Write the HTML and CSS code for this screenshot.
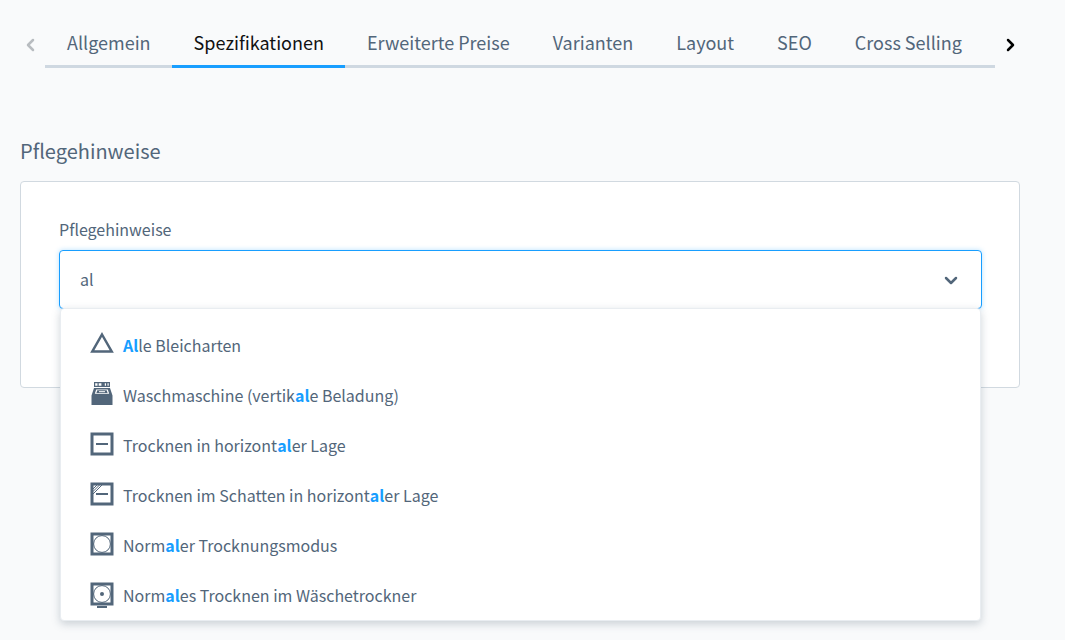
FILE: index.html
```html
<!DOCTYPE html>
<html lang="de">
<head>
<meta charset="utf-8">
<meta name="viewport" content="width=device-width, initial-scale=1">
<title>Spezifikationen</title>
<link rel="stylesheet" href="styles.css">
</head>
<body>
<main class="page">
  <nav class="tabs" aria-label="Produktbereiche">
    <button class="tabs-arrow" type="button" aria-label="Zurück" disabled>
      <svg width="10" height="14" viewBox="0 0 10 14"><path d="M8 2 3 7l5 5"/></svg>
    </button>
    <div class="tabs-list">
      <a class="tab" href="#allgemein">Allgemein</a>
      <a class="tab tab-active" href="#spezifikationen" aria-current="page">Spezifikationen</a>
      <a class="tab" href="#preise">Erweiterte Preise</a>
      <a class="tab" href="#varianten">Varianten</a>
      <a class="tab" href="#layout">Layout</a>
      <a class="tab" href="#seo">SEO</a>
      <a class="tab" href="#cross-selling">Cross Selling</a>
    </div>
    <button class="tabs-arrow tabs-arrow-next" type="button" aria-label="Weiter">
      <svg width="10" height="14" viewBox="0 0 10 14"><path d="m2 2 5 5-5 5"/></svg>
    </button>
  </nav>

  <section class="section">
    <h2 class="section-title">Pflegehinweise</h2>
    <div class="card">
      <label class="field-label" for="care">Pflegehinweise</label>
      <div class="select">
        <div class="select-box">
          <input class="select-input" id="care" type="text" value="al" role="combobox" aria-expanded="true" aria-controls="care-options" autocomplete="off">
          <svg class="select-chevron" width="14" height="10" viewBox="0 0 14 10"><path d="m2 3 5 5 5-5"/></svg>
        </div>
        <ul class="options" id="care-options" role="listbox" aria-label="Pflegehinweise">
          <li class="option" role="option">
            <svg class="icon" viewBox="0 0 24 26"><path class="line-bold" d="M12 4.500 21.700 21.500H2.300z"/></svg>
            <span><b class="hit">Al</b>le Bleicharten</span>
          </li>
          <li class="option" role="option">
            <svg class="icon" viewBox="0 0 24 26"><path class="solid" fill-rule="evenodd" d="M4 2h16v5H4zM5.200 3.200v2.500h2.300V3.200zM8.700 3.200v2.500h2.700V3.200zM14.800 3.200v2.500h1.200V3.200zM17.500 3.200v2.500h1.200V3.200z"/><path class="solid" fill-rule="evenodd" d="M4 8h16l2.500 7.500V25h-21V15.500zM6.200 9.500 4.800 13.700h14.400L17.800 9.500zM7.300 10.300h9.400l.9 2.600H6.400z"/><path class="line-white" d="M9 11.700h6"/></svg>
            <span>Waschmaschine (vertik<b class="hit">al</b>e Beladung)</span>
          </li>
          <li class="option" role="option">
            <svg class="icon" viewBox="0 0 24 26"><path class="line-frame" d="M2 4h20v20H2z"/><path class="line-mid" d="M6 14h12"/></svg>
            <span>Trocknen in horizont<b class="hit">al</b>er Lage</span>
          </li>
          <li class="option" role="option">
            <svg class="icon" viewBox="0 0 24 26"><path class="line-frame" d="M2 4h20v20H2z"/><path class="line-mid" d="M6 14h12"/><path class="line-thin" d="m3 9 5-5M3 11.500 10.500 4M3 14 13 4"/></svg>
            <span>Trocknen im Schatten in horizont<b class="hit">al</b>er Lage</span>
          </li>
          <li class="option" role="option">
            <svg class="icon" viewBox="0 0 24 26"><path class="line-frame" d="M2 4h20v20H2z"/><circle class="line-thin" cx="12" cy="14" r="8.400"/></svg>
            <span>Norm<b class="hit">al</b>er Trocknungsmodus</span>
          </li>
          <li class="option" role="option">
            <svg class="icon" viewBox="0 0 24 26"><path class="line-frame" d="M2 4h20v20H2z"/><circle class="line-thin" cx="12" cy="14" r="8.400"/><circle class="solid" cx="12" cy="14" r="2"/><path class="line-mid" d="M7 27h10"/></svg>
            <span>Norm<b class="hit">al</b>es Trocknen im Wäschetrockner</span>
          </li>
        </ul>
      </div>
    </div>
  </section>
</main>
</body>
</html>
```
FILE: styles.css
```css
* {
  box-sizing: border-box;
}

body {
  min-height: 100vh;
  margin: 0;
  background: #f9fafb;
  color: #52667a;
  font-family: "Noto Sans CJK SC", "Open Sans", sans-serif;
  font-size: 16px;
  line-height: 24px;
}

.page {
  min-height: 100vh;
  padding: 20px 45px 0 20px;
}

.tabs {
  display: flex;
}

.tabs-arrow {
  display: flex;
  align-items: center;
  justify-content: center;
  width: 25px;
  padding: 2px 6px 0 0;
  border: 0;
  background: none;
  color: #b8bcc0;
}

.tabs-arrow-next {
  padding: 2px 0 0 6px;
  color: #000;
}

.tabs-arrow path,
.select-chevron path {
  fill: none;
  stroke: currentColor;
  stroke-width: 2.5;
  stroke-linecap: round;
  stroke-linejoin: round;
}

.tabs-list {
  display: flex;
  flex: 1;
  min-width: 0;
  overflow: hidden;
  box-shadow: inset 0 -3px #cfd8e1;
}

.tab {
  padding: 10px 21px 11px 22px;
  border-bottom: 3px solid transparent;
  color: #52667a;
  font-size: 18px;
  text-decoration: none;
  white-space: nowrap;
}

.tab-active {
  border-color: #189eff;
  color: #111;
}

.section {
  padding-top: 67px;
}

.section-title {
  margin: 0 0 14px;
  font-size: 20px;
  font-weight: 400;
  line-height: 32px;
}

.card {
  padding: 35px 37px 78px 38px;
  border: 1px solid #d1d9e0;
  border-radius: 4px;
  background: #fff;
}

.field-label {
  display: block;
  margin-bottom: 9px;
}

.select {
  position: relative;
}

.select-box {
  display: flex;
  align-items: center;
  padding-right: 23px;
  border: 1px solid #189eff;
  border-radius: 4px;
  background: #fff;
  box-shadow: 0 0 5px #189eff50;
}

.select-input {
  flex: 1;
  min-width: 0;
  padding: 16px 20px 17px;
  border: 0;
  outline: 0;
  background: none;
  color: inherit;
  font: inherit;
}

.select-chevron {
  color: #52667a;
}

.options {
  position: absolute;
  top: 100%;
  right: 0;
  left: 0;
  margin: -1px 1px 0;
  padding: 11px 29px 0;
  border: 1px solid #e9edf1;
  border-radius: 4px;
  background: #fff;
  box-shadow: 0 3px 8px #52667a48;
  list-style: none;
}

.option {
  display: flex;
  align-items: center;
  gap: 9px;
  height: 50px;
}

.icon {
  width: 24px;
  height: 26px;
  margin-bottom: 4px;
  overflow: visible;
}

.icon path,
.icon circle {
  fill: none;
  stroke: #52667a;
}

.icon .solid {
  fill: #52667a;
  stroke: none;
}

.icon .line-white {
  stroke: #fff;
}

.icon .line-bold {
  stroke-width: 2.5;
}

.icon .line-frame {
  stroke-width: 3;
}

.icon .line-mid {
  stroke-width: 2;
}

.icon .line-thin {
  stroke-width: 1;
}

.hit {
  color: #189eff;
  font-weight: 700;
}
```
